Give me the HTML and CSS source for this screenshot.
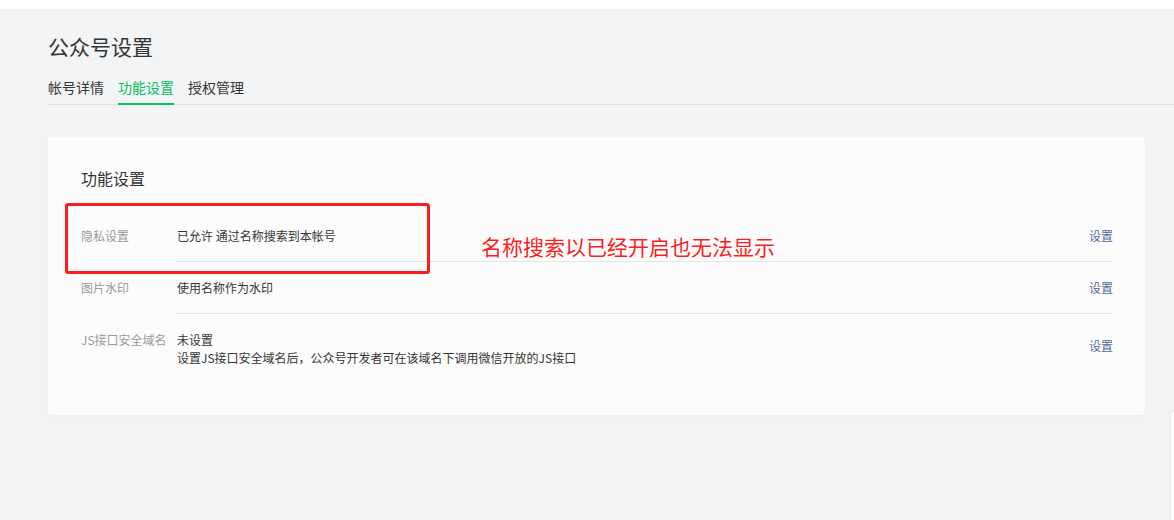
FILE: index.html
```html
<!DOCTYPE html>
<html lang="zh">
<head>
<meta charset="utf-8">
<title>公众号设置</title>
<link rel="stylesheet" href="styles.css">
</head>
<body>
<div class="topbar"></div>
<main class="main">
  <h1 class="page-title">公众号设置</h1>
  <nav class="tabs">
    <a class="tab">帐号详情</a>
    <a class="tab active">功能设置</a>
    <a class="tab">授权管理</a>
  </nav>
  <section class="card">
    <h2 class="card-title">功能设置</h2>
    <div class="row">
      <div class="label">隐私设置</div>
      <div class="body">
        <div class="value">已允许 通过名称搜索到本帐号</div>
        <a class="link">设置</a>
      </div>
    </div>
    <div class="row">
      <div class="label">图片水印</div>
      <div class="body">
        <div class="value">使用名称作为水印</div>
        <a class="link">设置</a>
      </div>
    </div>
    <div class="row last">
      <div class="label">JS接口安全域名</div>
      <div class="body">
        <div class="value">未设置<br>设置JS接口安全域名后，公众号开发者可在该域名下调用微信开放的JS接口</div>
        <a class="link">设置</a>
      </div>
    </div>
    <div class="mark-box"></div>
    <div class="mark-text">名称搜索以已经开启也无法显示</div>
  </section>
</main>
<div class="side-panel"></div>
</body>
</html>
```

FILE: styles.css
```css
html, body {
  margin: 0;
  padding: 0;
  height: 100%;
  overflow: hidden;
}
body {
  position: relative;
  background: #f3f4f6;
  font-family: "Noto Sans CJK SC", "Noto Sans", sans-serif;
  color: #353535;
}
.topbar {
  height: 9px;
  background: #ffffff;
}
.main {
  padding-left: 48px;
}
.page-title {
  margin: 0;
  padding-top: 22px;
  font-size: 21px;
  line-height: 30px;
  font-weight: 400;
  color: #353535;
}
.tabs {
  display: flex;
  gap: 14px;
  margin-top: 15px;
  border-bottom: 1px solid #e1e2e5;
}
.tab {
  font-size: 14px;
  line-height: 22px;
  padding-bottom: 5px;
  border-bottom: 2px solid transparent;
  margin-bottom: -1px;
  color: #353535;
  cursor: pointer;
}
.tab.active {
  color: #07c160;
  border-bottom-color: #07c160;
}
.card {
  position: relative;
  margin: 32px 29px 0 0;
  padding: 29px 32px 32px 33px;
  background: #fcfcfc;
  border-radius: 4px;
  box-shadow: 0 1px 3px rgba(0, 0, 0, 0.04);
}
.card-title {
  margin: 0 0 20px;
  font-size: 16px;
  line-height: 24px;
  font-weight: 400;
  color: #353535;
}
.row {
  display: flex;
  font-size: 12px;
  line-height: 18px;
}
.label {
  width: 96px;
  flex: none;
  padding: 17px 0 16px;
  color: #9a9a9a;
}
.body {
  flex: 1;
  display: flex;
  justify-content: space-between;
  align-items: center;
  padding: 17px 0 16px;
  border-bottom: 1px solid #e4e4e4;
}
.row.last .body {
  border-bottom: none;
}
.value {
  color: #353535;
}
.link {
  color: #576b95;
  cursor: pointer;
}
.row.last .link {
  margin-bottom: 6px;
}
.mark-box {
  position: absolute;
  left: 17px;
  top: 66px;
  width: 359px;
  height: 65px;
  border: 3px solid #fd1d1d;
  border-radius: 3px;
}
.mark-text {
  position: absolute;
  left: 433px;
  top: 97px;
  font-size: 21px;
  line-height: 24px;
  color: #fd1d1d;
}
.side-panel {
  position: absolute;
  left: 1171px;
  top: 412px;
  width: 20px;
  height: 108px;
  background: #ffffff;
  border-radius: 3px 0 0 0;
  box-shadow: 0 0 4px rgba(0, 0, 0, 0.08);
}
```
